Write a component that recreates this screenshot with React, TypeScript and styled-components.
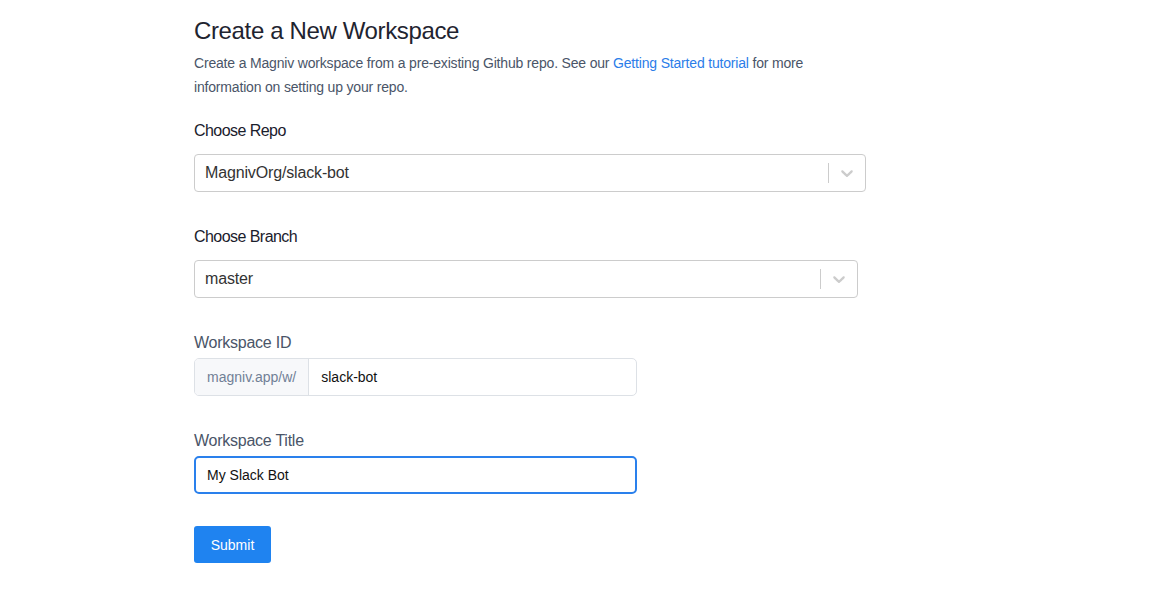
import React from "react";
import styled, { createGlobalStyle } from "styled-components";

const GlobalStyle = createGlobalStyle`
  html, body {
    margin: 0;
    padding: 0;
    background: #ffffff;
    font-family: "Liberation Sans", Arial, Helvetica, sans-serif;
  }
  * { box-sizing: border-box; }
`;

const Page = styled.main`
  padding: 15px 0 40px 194px;
  display: flex;
  flex-direction: column;
  align-items: flex-start;
`;

const Title = styled.h1`
  margin: 0;
  font-size: 24px;
  line-height: 32px;
  font-weight: 400;
  letter-spacing: -0.36px;
  color: #1f2430;
`;

const Description = styled.p`
  margin: 4px 0 0;
  width: 640px;
  font-size: 14px;
  line-height: 24px;
  letter-spacing: -0.18px;
  color: #4a5568;
`;

const Link = styled.a`
  color: #2b7de9;
  text-decoration: none;
`;

const Field = styled.div<{ $top: number; $gap: number }>`
  margin-top: ${(p) => p.$top}px;
  display: flex;
  flex-direction: column;
  gap: ${(p) => p.$gap}px;
`;

const Label = styled.label<{ $muted?: boolean }>`
  font-size: 16px;
  line-height: 24px;
  letter-spacing: ${(p) => (p.$muted ? "-0.25px" : "-0.55px")};
  color: ${(p) => (p.$muted ? "#4a5568" : "#1a202c")};
`;

const SelectBox = styled.div<{ $width: number }>`
  width: ${(p) => p.$width}px;
  height: 38px;
  display: flex;
  align-items: center;
  border: 1px solid hsl(0, 0%, 80%);
  border-radius: 4px;
  background: #fff;
`;

const SelectValue = styled.div`
  flex: 1;
  padding: 0 10px;
  font-size: 16px;
  letter-spacing: -0.15px;
  color: hsl(0, 0%, 20%);
`;

const Separator = styled.span`
  align-self: stretch;
  width: 1px;
  margin: 8px 0;
  background: hsl(0, 0%, 80%);
`;

const Indicator = styled.span`
  display: flex;
  padding: 8px;
  color: hsl(0, 0%, 80%);
`;

const InputGroup = styled.div`
  width: 443px;
  height: 38px;
  display: flex;
  border: 1px solid #dde1e6;
  border-radius: 5px;
  overflow: hidden;
`;

const Addon = styled.div`
  display: flex;
  align-items: center;
  padding: 0 12px;
  background: #f7f8fa;
  border-right: 1px solid #dde1e6;
  font-size: 14px;
  color: #718096;
`;

const GroupValue = styled.div`
  display: flex;
  align-items: center;
  padding: 0 12px;
  font-size: 14px;
  color: #111;
`;

const TextInput = styled.div`
  width: 443px;
  height: 38px;
  display: flex;
  align-items: center;
  padding: 0 11px;
  border: 2px solid #2a80ec;
  border-radius: 5px;
  font-size: 14px;
  color: #111;
`;

const SubmitButton = styled.button`
  margin-top: 32px;
  width: 77px;
  height: 37px;
  padding: 0;
  border: none;
  border-radius: 3px;
  background: #1f83f0;
  color: #fff;
  font-family: inherit;
  font-size: 14px;
  cursor: pointer;
`;

const Chevron = () => (
  <svg width="20" height="20" viewBox="0 0 20 20" fill="currentColor" aria-hidden="true">
    <path d="M4.516 7.548c0.436-0.446 1.043-0.481 1.576 0l3.908 3.747 3.908-3.747c0.533-0.481 1.141-0.446 1.574 0 0.436 0.445 0.408 1.197 0 1.615-0.406 0.418-4.695 4.502-4.695 4.502-0.217 0.223-0.502 0.335-0.787 0.335s-0.57-0.112-0.789-0.335c0 0-4.287-4.084-4.695-4.502s-0.436-1.17 0-1.615z" />
  </svg>
);

const Select = ({ value, width }: { value: string; width: number }) => (
  <SelectBox $width={width}>
    <SelectValue>{value}</SelectValue>
    <Separator />
    <Indicator>
      <Chevron />
    </Indicator>
  </SelectBox>
);

export default function App() {
  return (
    <>
      <GlobalStyle />
      <Page>
        <Title>Create a New Workspace</Title>
        <Description>
          Create a Magniv workspace from a pre-existing Github repo. See our{" "}
          <Link href="#">Getting Started tutorial</Link> for more information on setting up your
          repo.
        </Description>
        <Field $top={20} $gap={11}>
          <Label>Choose Repo</Label>
          <Select value="MagnivOrg/slack-bot" width={672} />
        </Field>
        <Field $top={33} $gap={11}>
          <Label>Choose Branch</Label>
          <Select value="master" width={664} />
        </Field>
        <Field $top={33} $gap={3}>
          <Label $muted>Workspace ID</Label>
          <InputGroup>
            <Addon>magniv.app/w/</Addon>
            <GroupValue>slack-bot</GroupValue>
          </InputGroup>
        </Field>
        <Field $top={33} $gap={3}>
          <Label $muted>Workspace Title</Label>
          <TextInput>My Slack Bot</TextInput>
        </Field>
        <SubmitButton>Submit</SubmitButton>
      </Page>
    </>
  );
}
